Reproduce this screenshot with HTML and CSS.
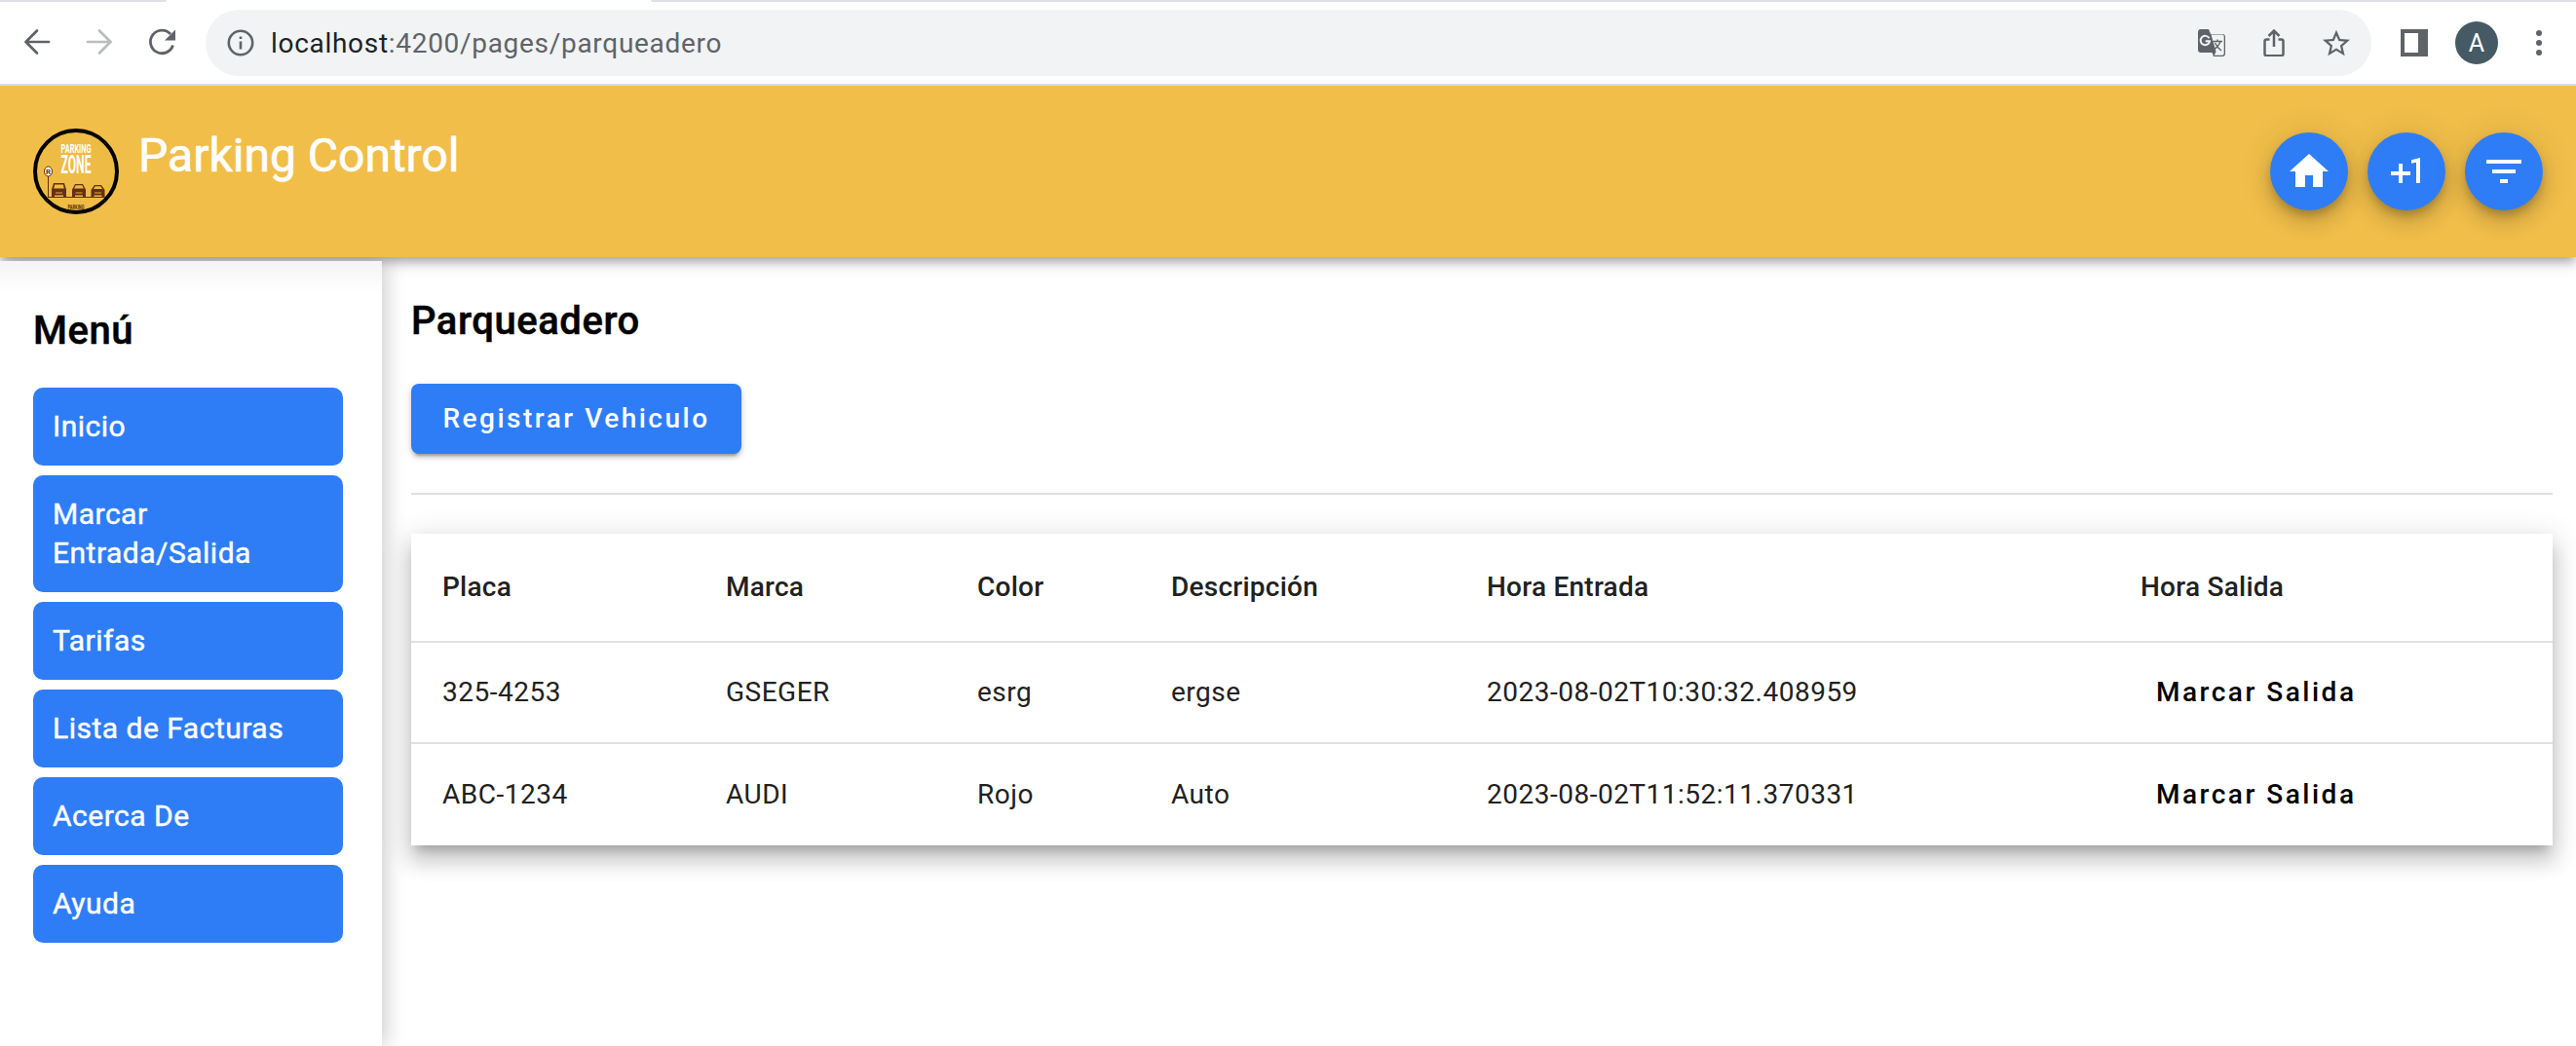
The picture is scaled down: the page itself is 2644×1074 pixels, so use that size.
FILE: index.html
```html
<!DOCTYPE html>
<html lang="es">
<head>
<meta charset="utf-8">
<title>Parking Control</title>
<link rel="stylesheet" href="styles.css">
</head>
<body>
<div class="tabstrip"><span class="tab-left"></span><span class="tab-active"></span><span class="tab-right"></span></div>
<div class="toolbar">
  <div class="nav">
    <svg class="ic" viewBox="0 0 32 32"><path d="M28 16H4.500M16 4.500L4.500 16 16 27.500" fill="none" stroke="#5f6368" stroke-width="2.700" stroke-linecap="round"/></svg>
    <svg class="ic" viewBox="0 0 32 32"><path d="M4 16h23M16 4.500L27.500 16 16 27.500" fill="none" stroke="#babcbe" stroke-width="2.700" stroke-linecap="round"/></svg>
    <svg class="ic" viewBox="0 0 32 32"><path d="M27.500 19.500A11.800 11.800 0 1 1 25 8" fill="none" stroke="#5f6368" stroke-width="2.800"/><path d="M30 3.500v11H19z" fill="#5f6368"/></svg>
  </div>
  <div class="omnibox">
    <svg class="info" viewBox="0 0 28 28"><circle cx="14" cy="14" r="12.200" fill="none" stroke="#5f6368" stroke-width="2.600"/><path d="M12.700 12.500h2.600v8h-2.600zM12.700 7.500h2.600v2.600h-2.600z" fill="#5f6368"/></svg>
    <span class="url"><span class="host">localhost</span>:4200/pages/parqueadero</span>
    <div class="actions">
      <svg class="act" viewBox="0 0 28 28"><path d="M3 0h8l2 5h12a3 3 0 0 1 3 3v17a3 3 0 0 1-3 3h-9l-1.500-4H3a3 3 0 0 1-3-3V3a3 3 0 0 1 3-3z" fill="#5f6368"/><path d="M13.500 5.500h11.200q2 0 2 2v17.200q0 2-2 2h-8L18.500 23z" fill="#f1f3f4"/><path d="M11.500 9.300A4.700 4.700 0 1 0 12 12.300H7.700" fill="none" stroke="#f1f3f4" stroke-width="2"/><path d="M15.500 12.500h9.500M20 10.500v2M23 12.500q-1.500 5-7 8.500M17.500 14q2 4.500 6.500 8" fill="none" stroke="#5f6368" stroke-width="1.400"/></svg>
      <svg class="act" viewBox="0 0 28 28"><path d="M9.500 10.500H6.500q-2 0-2 2v12.700q0 2 2 2h15q2 0 2-2V12.500q0-2-2-2h-3M14 18V2M8.500 7L14 1.500 19.500 7" fill="none" stroke="#5f6368" stroke-width="2.500"/></svg>
      <svg class="act" viewBox="2 1.500 20 20"><path d="M22 9.240l-7.190-.62L12 2 9.190 8.630 2 9.240l5.460 4.730L5.820 21 12 17.270 18.180 21l-1.630-7.030L22 9.240zM12 15.400l-3.760 2.270 1-4.280-3.320-2.880 4.380-.38L12 6.100l1.710 4.040 4.380.38-3.320 2.880 1 4.280L12 15.400z" fill="#5f6368"/></svg>
    </div>
  </div>
  <svg class="panel" viewBox="0 0 28 28"><path d="M0 0h28v28H0zM4 4v20h14V4z" fill="#5f6368" fill-rule="evenodd"/></svg>
  <span class="avatar">A</span>
  <svg class="dots" viewBox="0 0 6 26"><circle cx="3" cy="3" r="3"/><circle cx="3" cy="13" r="3"/><circle cx="3" cy="23" r="3"/></svg>
</div>
<header class="header">
  <svg class="logo" viewBox="0 0 88 88">
    <circle cx="44" cy="44" r="42" fill="#eebb45" stroke="#000" stroke-width="4"/>
    <text x="44" y="24.700" class="l1" textLength="31" lengthAdjust="spacingAndGlyphs">PARKING</text>
    <text x="44" y="46" class="l2" textLength="31" lengthAdjust="spacingAndGlyphs">ZONE</text>
    <path d="M15.500 48v23M15 70.500h59" stroke="#63310f" stroke-width="1" fill="none"/>
    <ellipse cx="15.500" cy="44" rx="4" ry="5" fill="#fff" stroke="#63310f" stroke-width="1"/>
    <text x="15.500" y="47" class="l3">R</text>
    <g fill="#63310f"><path d="M21 56h11l1.500 5 .5 1v8h-3v-1.500H22V70h-3v-8l.5-1zM22.200 57.500l-1 4h10.600l-1-4z" fill-rule="evenodd"/><path d="M23 65h7v2h-7z" fill="#a76c27"/></g>
    <g fill="#63310f"><path d="M43 57h8l2 4 1 1.500V70h-3v-1.500h-8V70h-3v-7.500l1-1.500zM43.700 58.300l-1.500 3.200h9.600l-1.500-3.200z" fill-rule="evenodd"/><path d="M43.500 65h7v2h-7z" fill="#a76c27"/></g>
    <g fill="#63310f"><path d="M63 58h7l2.500 3.500 1 1.500v7h-3v-1.500h-8V70h-3v-7l1-1.500zM63.700 59.300l-1.700 2.700h9l-1.700-2.700z" fill-rule="evenodd"/><path d="M63 65h7v2h-7z" fill="#a76c27"/></g>
    <text x="44" y="83" class="l4" textLength="17" lengthAdjust="spacingAndGlyphs">PARKING</text>
  </svg>
  <h1 class="title">Parking Control</h1>
  <div class="fabs">
    <button class="fab"><svg viewBox="0 0 24 24"><path d="M10 20v-6h4v6h5v-8h3L12 3 2 12h3v8z"/></svg></button>
    <button class="fab"><svg viewBox="0 0 24 24"><path d="M10 8H8v4H4v2h4v4h2v-4h4v-2h-4zM14.500 6.080V7.900l2.500-.5V18h2V5z"/></svg></button>
    <button class="fab"><svg viewBox="0 0 24 24"><path d="M10 18h4v-2h-4v2zM3 6v2h18V6H3zm3 7h12v-2H6v2z"/></svg></button>
  </div>
</header>
<div class="layout">
  <aside class="sidebar">
    <h2 class="menu-title">Menú</h2>
    <nav class="menu">
      <a class="item">Inicio</a>
      <a class="item">Marcar Entrada/Salida</a>
      <a class="item">Tarifas</a>
      <a class="item">Lista de Facturas</a>
      <a class="item">Acerca De</a>
      <a class="item">Ayuda</a>
    </nav>
  </aside>
  <main class="main">
    <h2 class="page-title">Parqueadero</h2>
    <button class="register">Registrar Vehiculo</button>
    <hr class="rule">
    <table class="table">
      <colgroup><col class="c1"><col class="c2"><col class="c3"><col class="c4"><col class="c5"><col></colgroup>
      <thead><tr><th>Placa</th><th>Marca</th><th>Color</th><th>Descripción</th><th>Hora Entrada</th><th>Hora Salida</th></tr></thead>
      <tbody>
        <tr><td>325-4253</td><td>GSEGER</td><td>esrg</td><td>ergse</td><td>2023-08-02T10:30:32.408959</td><td><button class="mark">Marcar Salida</button></td></tr>
        <tr><td>ABC-1234</td><td>AUDI</td><td>Rojo</td><td>Auto</td><td>2023-08-02T11:52:11.370331</td><td><button class="mark">Marcar Salida</button></td></tr>
      </tbody>
    </table>
  </main>
</div>
</body>
</html>
```
FILE: styles.css
```css
* { box-sizing: border-box; }
body { margin: 0; height: 1074px; overflow: hidden; display: flex; flex-direction: column; background: #fff; font-family: Roboto, sans-serif; color: #000; }
h1, h2 { margin: 0; }
button { border: 0; padding: 0; font-family: inherit; }

.tabstrip { display: flex; height: 2px; flex: none; background: #fff; }
.tab-left { width: 171px; background: #dfe1e6; border-bottom-right-radius: 4px; }
.tab-active { width: 497px; }
.tab-right { flex: 1; background: #dfe1e6; border-bottom-left-radius: 4px; }

.toolbar { display: flex; align-items: center; flex: none; height: 86px; padding: 0 34px 0 22px; border-bottom: 2px solid #dadce0; }
.nav { display: flex; gap: 32px; width: 189px; flex: none; margin-bottom: 2px; }
.ic { width: 32px; height: 32px; }
.omnibox { display: flex; align-items: center; width: 2223px; height: 68px; border-radius: 34px; background: #f1f3f4; padding: 0 22px; }
.info { width: 28px; height: 28px; }
.url { margin-left: 17px; font-size: 28px; letter-spacing: .7px; color: #5f6368; }
.host { color: #202124; }
.actions { display: flex; gap: 36px; margin-left: auto; }
.act { width: 28px; height: 28px; }
.panel { width: 28px; height: 28px; margin-left: 30px; }
.avatar { width: 44px; height: 44px; border-radius: 50%; margin-left: 28px; background: #455a64; color: #fff; font-size: 25px; line-height: 46px; text-align: center; }
.dots { width: 6px; height: 26px; margin-left: 39px; fill: #5f6368; }

.header { position: relative; display: flex; flex: none; height: 176px; padding: 44px 34px; background: #f1be4a; box-shadow: 0 4px 8px -2px rgba(0,0,0,.2), 0 8px 10px rgba(0,0,0,.14), 0 2px 20px rgba(0,0,0,.12); clip-path: inset(0 0 -50px 0); }
.logo { width: 88px; height: 88px; overflow: visible; }
.logo text { font-family: Roboto, sans-serif; text-anchor: middle; font-weight: 700; fill: #fff; }
.logo .l1 { font-size: 13.5px; }
.logo .l2 { font-size: 25px; }
.logo .l3 { font-size: 8px; fill: #63310f; }
.logo .l4 { font-size: 8px; fill: #63310f; }
.title { margin-left: 20px; font-size: 48px; line-height: 56px; font-weight: 400; color: #fff; -webkit-text-stroke: .7px #fff; }
.fabs { display: flex; gap: 20px; margin-left: auto; padding-top: 4px; }
.fab { width: 80px; height: 80px; padding: 16px; border-radius: 50%; background: #2e7df7; box-shadow: 0 6px 10px -2px rgba(0,0,0,.2), 0 12px 20px rgba(0,0,0,.14), 0 2px 36px rgba(0,0,0,.12); }
.fab svg { display: block; width: 48px; height: 48px; fill: #fff; }

.layout { display: flex; flex: 1; padding-top: 4px; }
.sidebar { position: relative; width: 392px; padding: 40px 40px 0 34px; background: linear-gradient(#f4f4f4, #fff 32px); box-shadow: 4px 0 20px rgba(0,0,0,.2); clip-path: inset(-4px -40px 0 0); }
.menu-title { font-size: 40px; line-height: 64px; font-weight: 500; letter-spacing: .5px; -webkit-text-stroke: .5px #000; }
.menu { display: flex; flex-direction: column; gap: 10px; margin-top: 26px; }
.item { padding: 20px; border-radius: 10px; background: #2e7df7; color: #fff; font-size: 30px; line-height: 40px; letter-spacing: .5px; -webkit-text-stroke: .45px #fff; }
.main { flex: 1; padding: 30px 24px 0 30px; }
.page-title { font-size: 40px; line-height: 64px; font-weight: 500; letter-spacing: .55px; -webkit-text-stroke: .5px #000; }
.register { display: block; margin-top: 32px; width: 339px; height: 72px; padding-bottom: 2px; border-radius: 8px; background: #2e7df7; color: #fff; font-size: 28px; font-weight: 500; letter-spacing: 2.500px; box-shadow: 0 6px 2px -4px rgba(0,0,0,.2), 0 4px 4px rgba(0,0,0,.14), 0 2px 10px rgba(0,0,0,.12); }
.rule { margin: 40px 0; border: 0; height: 2px; background: #e0e0e0; }
.table { width: 100%; table-layout: fixed; border-spacing: 0; background: #fff; font-size: 28px; letter-spacing: .5px; color: #212121; box-shadow: 0 10px 10px -6px rgba(0,0,0,.2), 0 16px 20px 2px rgba(0,0,0,.14), 0 6px 28px 4px rgba(0,0,0,.12); }
.c1 { width: 307px; } .c2 { width: 258px; } .c3 { width: 199px; } .c4 { width: 324px; } .c5 { width: 671px; }
th, td { text-align: left; padding: 0 0 2px 16px; border-bottom: 2px solid #e0e0e0; }
th:first-child, td:first-child { padding-left: 32px; }
th { height: 112px; font-weight: 500; letter-spacing: .25px; }
td { height: 104px; }
tbody tr:last-child td { border-bottom: 0; }
.mark { margin-left: 16px; background: none; color: #000; font-size: 28px; font-weight: 500; letter-spacing: 2.500px; }
```
